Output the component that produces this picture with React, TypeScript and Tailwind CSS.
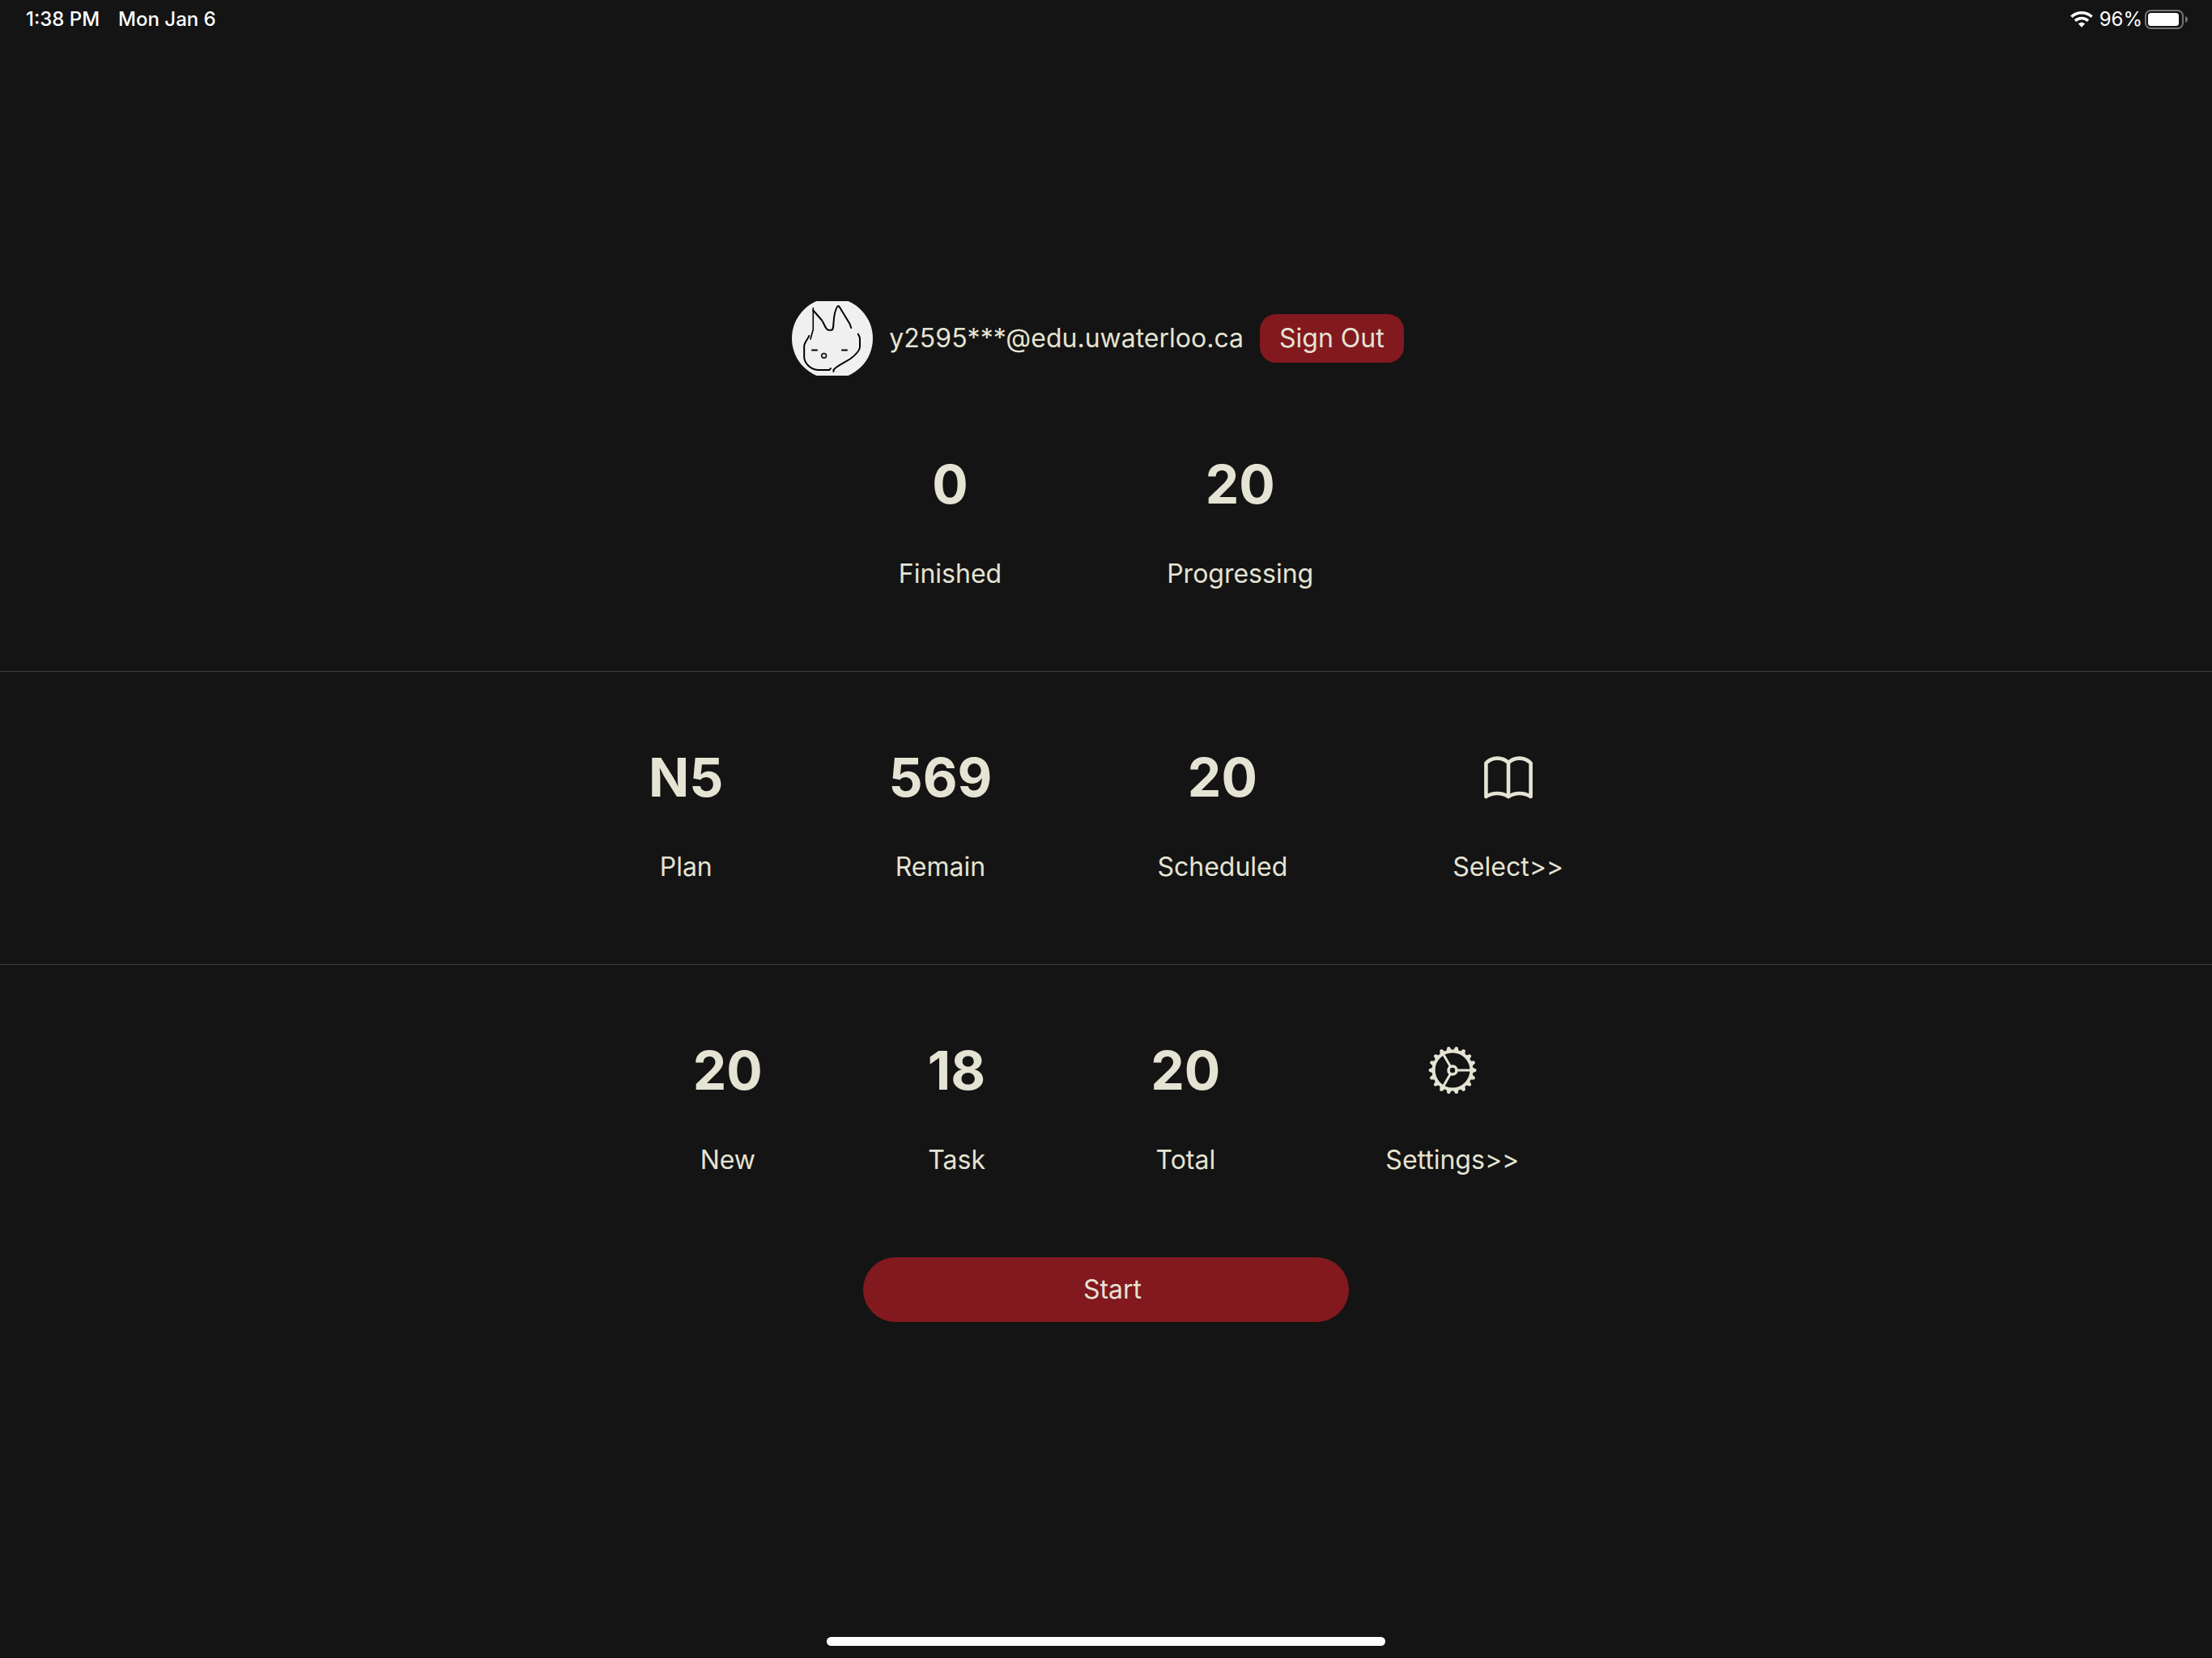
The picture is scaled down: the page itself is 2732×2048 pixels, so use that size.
import type { ReactNode } from "react";

function Avatar() {
  return (
    <svg role="img" aria-label="Profile picture" viewBox="0 0 100 92" className="h-[92px] w-[100px] shrink-0">
      <circle cx="50" cy="46" r="50" fill="#f0f0f0" />
      <g fill="none" stroke="#000" strokeWidth="2" strokeLinecap="round" strokeLinejoin="round">
        <path d="M26.3 8.5V35L23 47" strokeWidth="1.6" />
        <path d="M26.5 11.5L37 23.5C40.500 28.500 41.500 35.500 45.500 35.800H49C52.500 35 50.500 26 53 15C54.500 9.500 56 6 57.500 6C59 6.500 61 11 63 14L71.500 28L73.300 33" />
        <path d="M21.300 42.800C19.500 47 15.300 51.500 15.200 55.500V69C15.500 77.500 24 84.500 32 85H46.500L48 83" />
        <path d="M51.500 87V84.800C56 79.500 65 76 72.500 71C78.500 66.500 83.500 61 84 57V46C84 43.500 82.500 42.500 81.800 40.500" />
        <path d="M24.200 60.500h7.600M61.200 60.500h7.600" strokeLinecap="butt" />
        <circle cx="39.700" cy="67.300" r="2.900" strokeWidth="1.500" />
      </g>
    </svg>
  );
}

function BookIcon() {
  return (
    <svg aria-hidden="true" viewBox="0 0 60 53" className="h-[53px] w-[60px]" fill="none" stroke="currentColor" strokeWidth="4.6" strokeLinecap="round" strokeLinejoin="round">
      <path d="M2.400 50V8.500C10 .7 22.500 .7 30 8C37.500 .7 50 .7 57.600 8.500V50C49 44.600 38.500 44.600 30 50C21.500 44.600 11 44.600 2.400 50Z" />
      <path d="M30 8V50" />
    </svg>
  );
}

const toothAngles = Array.from({ length: 18 }, (_, i) => i * 20);

function GearIcon() {
  return (
    <svg aria-hidden="true" viewBox="-30 -30 60 60" className="size-[60px]" fill="none" stroke="currentColor">
      <circle r="23.400" strokeWidth="4" />
      <circle r="5" strokeWidth="3.600" />
      {[0, 120, 240].map((angle) => (
        <path key={angle} d="M6 0H23" strokeWidth="3" transform={`rotate(${angle})`} />
      ))}
      {toothAngles.map((angle) => (
        <path
          key={angle}
          d="M24.500 -3.400L29 -1.600Q30 0 29 1.600L24.500 3.400Z"
          fill="currentColor"
          stroke="none"
          transform={`rotate(${angle})`}
        />
      ))}
    </svg>
  );
}

function WifiIcon() {
  return (
    <svg aria-label="Wi-Fi" role="img" viewBox="0 0 28 20" className="h-5 w-7">
      <g fill="none" stroke="#fff" strokeWidth="3.600">
        <path d="M1.400 6.800C8.400 .1 19.600 .1 26.600 6.800" />
        <path d="M6 11.600C10.500 7.400 17.500 7.400 22 11.600" />
      </g>
      <path d="M9.800 15.300C12.200 13.200 15.800 13.200 18.200 15.300L14 19.800Z" fill="#fff" />
    </svg>
  );
}

function BatteryIcon() {
  return (
    <svg aria-label="Battery" role="img" viewBox="0 0 54 24" className="h-6 w-[54px]">
      <rect x="1" y="1" width="46" height="22" rx="6.500" fill="none" stroke="#757575" strokeWidth="2" />
      <rect x="4" y="4" width="38" height="16" rx="3.500" fill="#fff" />
      <path d="M50 8C54 9.500 54 14.500 50 16Z" fill="#757575" />
    </svg>
  );
}

function Stat({ value, label }: { value: ReactNode; label: string }) {
  return (
    <span className="flex flex-col items-center gap-[51px]">
      <span className="flex h-20 items-center text-[66px] leading-[80px] font-bold">{value}</span>
      <span className="text-[32px] leading-[40px]">{label}</span>
    </span>
  );
}

function StatRow({ children }: { children: ReactNode }) {
  return <div className="flex justify-center gap-[204px]">{children}</div>;
}

export default function App() {
  return (
    <div className="flex min-h-screen flex-col bg-[#141414] font-['Inter','Liberation_Sans',sans-serif] text-[#e5e3d3]">
      <header className="flex h-12 items-center justify-between pr-[29px] pl-8 text-2xl font-medium text-white">
        <div className="flex gap-[23px]">
          <span>1:38 PM</span>
          <span>Mon Jan 6</span>
        </div>
        <div className="flex items-center">
          <WifiIcon />
          <span className="mr-[3px] ml-2 font-normal">96%</span>
          <BatteryIcon />
        </div>
      </header>

      <main className="flex grow flex-col pt-[324px]">
        <section className="border-b border-[#3e3e3e] pb-[100px]">
          <div className="mb-[94px] flex items-center justify-center gap-5 pr-5">
            <Avatar />
            <span className="text-[32px] leading-[40px]">y2595***@edu.uwaterloo.ca</span>
            <button type="button" className="h-[60px] rounded-[20px] bg-[#82191f] px-6 text-[32px] leading-[40px]">
              Sign Out
            </button>
          </div>
          <StatRow>
            <Stat value="0" label="Finished" />
            <Stat value="20" label="Progressing" />
          </StatRow>
        </section>

        <section className="border-b border-[#3e3e3e] pt-[90px] pb-[100px]">
          <StatRow>
            <Stat value="N5" label="Plan" />
            <Stat value="569" label="Remain" />
            <Stat value="20" label="Scheduled" />
            <button type="button">
              <Stat value={<BookIcon />} label="Select>>" />
            </button>
          </StatRow>
        </section>

        <section className="flex flex-col items-center pt-[90px]">
          <StatRow>
            <Stat value="20" label="New" />
            <Stat value="18" label="Task" />
            <Stat value="20" label="Total" />
            <button type="button">
              <Stat value={<GearIcon />} label="Settings>>" />
            </button>
          </StatRow>
          <button type="button" className="mt-[100px] h-20 w-[600px] max-w-full rounded-full bg-[#82191f] pl-4 text-[32px] leading-[40px]">
            Start
          </button>
        </section>
      </main>

      <footer className="flex justify-center pb-[15px]">
        <div className="h-[11px] w-[690px] max-w-full rounded-full bg-white" />
      </footer>
    </div>
  );
}
